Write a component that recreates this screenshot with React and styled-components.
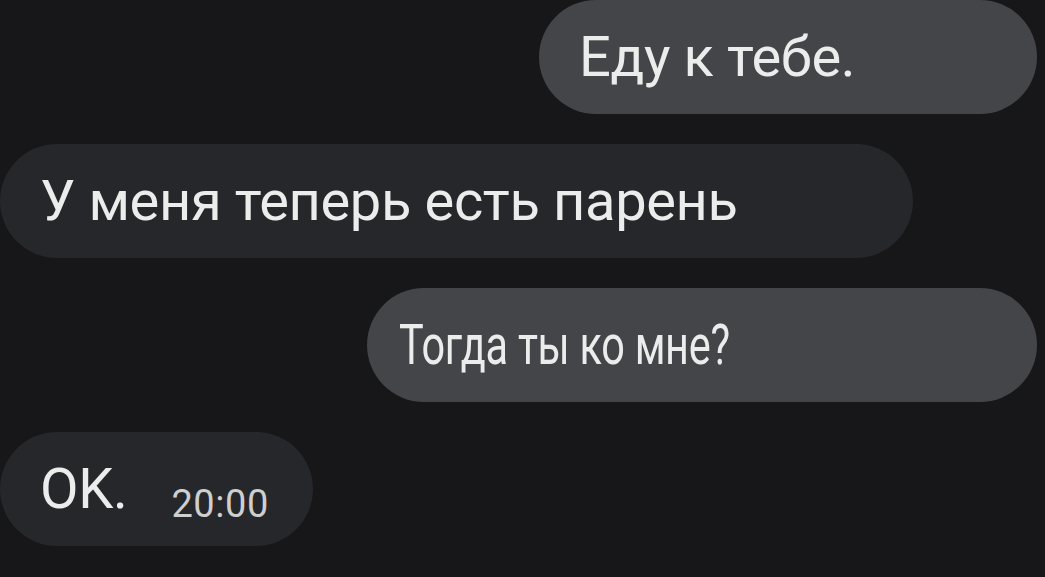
import styled, { createGlobalStyle } from "styled-components";

const GlobalStyle = createGlobalStyle`
    html, body {
        margin: 0;
        padding: 0;
        background: #17171a;
    }
    body {
        font-family: Roboto, "Noto Sans", sans-serif;
        overflow: hidden;
    }
`

const Chat = styled.div`
    display: flex;
    flex-direction: column;
    gap: 30px;
    width: 1045px;
    height: 577px;
    background: #17171a;
`
const Bubble = styled.div`
    box-sizing: border-box;
    display: flex;
    align-items: baseline;
    height: 114px;
    width: ${props => props.$width}px;
    padding-left: ${props => props.$pad || 40}px;
    border-radius: 57px;
    align-self: ${props => props.$out ? "flex-end" : "flex-start"};
    margin-right: ${props => props.$out ? "8px" : "0"};
    background: ${props => props.$out ? "#444548" : "#26272a"};
    color: #ececec;
    font-size: 56px;
    letter-spacing: -0.35px;
    line-height: 114px;
    white-space: nowrap;
`
const Narrow = styled.span`
    display: inline-block;
    transform: scaleX(${props => props.$scale});
    transform-origin: left center;
`
const Time = styled.span`
    font-size: 38px;
    letter-spacing: 0.6px;
    color: #cfcfcf;
    margin-left: 44px;
    position: relative;
    top: 9px;
`

const App = () => {
    return (
        <>
            <GlobalStyle />
            <Chat>
                <Bubble $out $width={498}>Еду к тебе.</Bubble>
                <Bubble $width={913}>У меня теперь есть парень</Bubble>
                <Bubble $out $width={670} $pad={32}>
                    <Narrow $scale={0.74}>Тогда ты ко мне?</Narrow>
                </Bubble>
                <Bubble $width={313}>
                    OK.<Time>20:00</Time>
                </Bubble>
            </Chat>
        </>
    )
}

export default App;
